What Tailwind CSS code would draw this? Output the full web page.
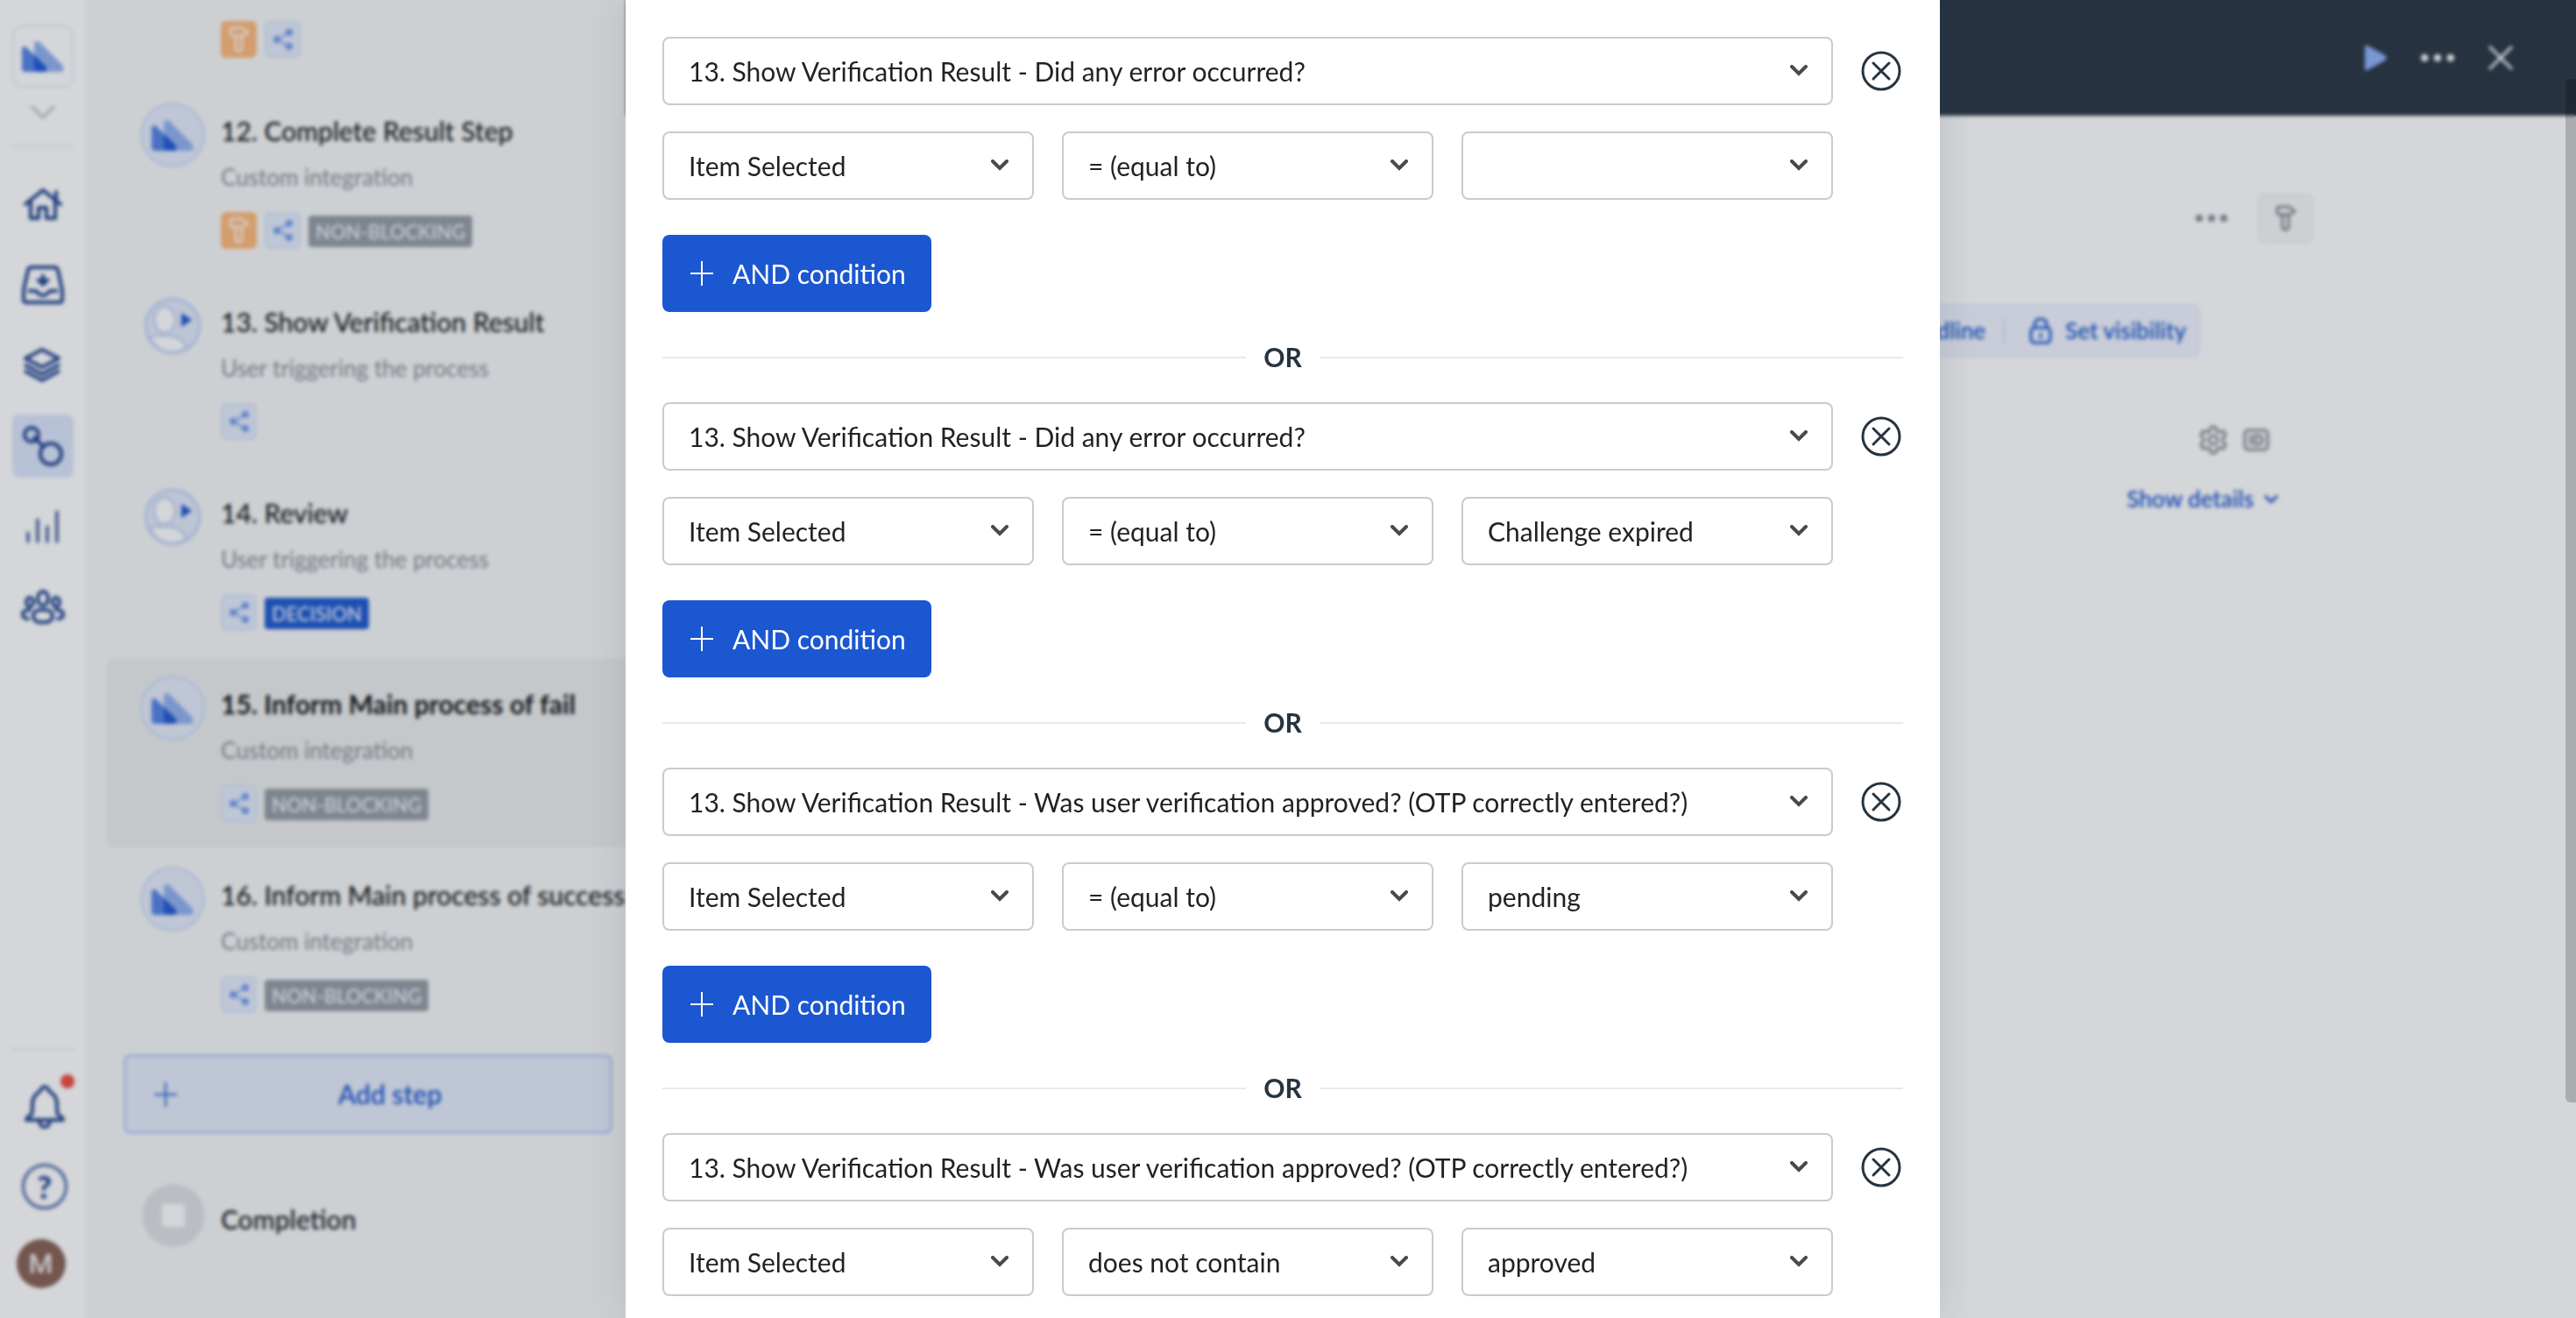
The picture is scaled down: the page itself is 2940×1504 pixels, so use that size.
<!DOCTYPE html>
<html lang="en">
<head>
  <meta charset="UTF-8" />
  <meta name="viewport" content="width=device-width, initial-scale=1.0" />
  <title>Process editor - Step conditions</title>
  <script src="https://cdn.jsdelivr.net/npm/@tailwindcss/browser@4"></script>
</head>
<body class="h-screen overflow-hidden bg-white font-['Lato',sans-serif] text-[30px] text-[#1f2124]">

  <!-- shared icons -->
  <svg class="hidden">
    <symbol id="logo" viewBox="0 0 48 35">
      <path fill="#5382e5" d="M0 10Q0 6 3 6Q5 6 7 9L27 28Q31 35 25 35H4Q0 35 0 31Z" />
      <path fill="#90b0f1" d="M14 4Q14 0 18 0Q20 0 22 3L46 27Q50 35 44 35H18Q14 35 14 31Z" />
      <path fill="#1c57d4" d="M14 16L27 28Q31 35 25 35H18Q14 35 14 31Z" />
    </symbol>
    <symbol id="user" viewBox="0 0 66 66">
      <circle cx="33" cy="33" r="31" fill="#e2eafa" stroke="#c3d3f7" stroke-width="3" />
      <ellipse cx="24" cy="26" rx="12" ry="15" fill="#fff" stroke="#c8d6f5" stroke-width="3" />
      <path d="M7 46Q12 43 26 44Q42 44 49 57Q42 63 33 63Q15 63 7 46Z" fill="#fff" stroke="#c8d6f5" stroke-width="3" />
      <path d="M43 18L55 26L43 34Z" fill="#1b57d0" />
    </symbol>
    <symbol id="share" viewBox="0 0 24 26">
      <path d="M5 13L19 5M5 13L19 21" stroke="currentColor" stroke-width="2" fill="none" />
      <circle cx="5" cy="13" r="4" fill="currentColor" />
      <circle cx="19" cy="5" r="4" fill="currentColor" />
      <circle cx="19" cy="21" r="4" fill="currentColor" />
    </symbol>
    <symbol id="key" viewBox="0 0 24 30">
      <path d="M5 2H14Q17 2 19 5L22 7L19 9Q17 11 14 11H5Q2 11 2 8V5Q2 2 5 2ZM8 11V25Q8 28 11 28Q15 28 15 25V11" fill="none" stroke="currentColor" stroke-width="3" stroke-linejoin="round" />
    </symbol>
    <symbol id="chevron" viewBox="0 0 20 13">
      <path d="M2 2L10 10L18 2" fill="none" stroke="currentColor" stroke-width="4" stroke-linecap="round" stroke-linejoin="miter" />
    </symbol>
    <symbol id="plus" viewBox="0 0 26 28">
      <path d="M13 0V28M0 14H26" fill="none" stroke="currentColor" stroke-width="2" />
    </symbol>
    <symbol id="dots" viewBox="0 0 36 8">
      <circle cx="4" cy="4" r="4" fill="currentColor" />
      <circle cx="18" cy="4" r="4" fill="currentColor" />
      <circle cx="32" cy="4" r="4" fill="currentColor" />
    </symbol>
  </svg>

  <div class="flex h-full overflow-hidden">

    <!-- Sidebar -->
    <nav class="flex w-[97px] shrink-0 flex-col items-center bg-white pt-[29px] pb-[34px] text-[#1c3f8c]">
      <button aria-label="Workspace" class="flex h-[71px] w-[70px] items-center justify-center rounded-xl border-2 border-[#e8ebf3]">
        <svg class="h-[35px] w-12"><use href="#logo" /></svg>
      </button>
      <button aria-label="Switch workspace" class="mt-5 text-[#b9bfc6]">
        <svg class="h-4 w-7" viewBox="0 0 28 16" fill="none" stroke="currentColor" stroke-width="3"><path d="M1 1L14 14L27 1" /></svg>
      </button>
      <hr class="mt-[30px] w-[70px] border-t-2 border-[#eceef0]" />

      <div class="mt-[29px] flex flex-col gap-5">
        <a href="#" aria-label="Home" class="flex h-18 w-[70px] items-center justify-center rounded-lg">
          <svg class="h-10 w-12" viewBox="0 0 48 40" fill="none" stroke="currentColor" stroke-width="4" stroke-linejoin="round" stroke-linecap="round">
            <path d="M4 20L24 4L44 20M39 6V16M10 16V36H19V24H28V36H38V16" />
          </svg>
        </a>
        <a href="#" aria-label="Inbox" class="flex h-18 w-[70px] items-center justify-center rounded-lg">
          <svg class="h-11 w-12" viewBox="0 0 48 44" fill="none" stroke="currentColor" stroke-width="4" stroke-linejoin="round">
            <path d="M11 2H37Q40 2 41 5L46 28V39Q46 42 43 42H5Q2 42 2 39V28L7 5Q8 2 11 2ZM7 29H16Q20 34 24 34Q28 34 32 29H41M24 10V20" />
            <path d="M17 16H31L24 23Z" fill="currentColor" stroke-width="2" />
          </svg>
        </a>
        <a href="#" aria-label="Templates" class="flex h-18 w-[70px] items-center justify-center rounded-lg">
          <svg class="h-10 w-11" viewBox="0 0 44 40" fill="none" stroke="currentColor" stroke-width="4" stroke-linejoin="round">
            <path d="M21 2L40 12L21 22L2 12ZM1 19L21 30L41 19M1 26L21 37L41 26" />
          </svg>
        </a>
        <a href="#" aria-label="Processes" aria-current="page" class="flex h-18 w-[70px] items-center justify-center rounded-lg bg-[#dce6fc]">
          <svg class="h-[46px] w-[46px]" viewBox="0 0 46 46" fill="none" stroke="currentColor" stroke-width="4">
            <circle cx="10" cy="10" r="8" /><circle cx="32" cy="32" r="12" /><path d="M12 12L24 24" />
          </svg>
        </a>
        <a href="#" aria-label="Reports" class="flex h-18 w-[70px] items-center justify-center rounded-lg">
          <svg class="h-10 w-10" viewBox="0 0 40 40" fill="none" stroke="currentColor" stroke-width="3" stroke-linecap="round">
            <path d="M3 27V37M14 12V37M25 20V37M36 3V37" />
          </svg>
        </a>
        <a href="#" aria-label="People" class="flex h-18 w-[70px] items-center justify-center rounded-lg">
          <svg class="h-10 w-[50px]" viewBox="0 0 50 40" fill="none" stroke="currentColor" stroke-width="4" stroke-linecap="round">
            <ellipse cx="25" cy="10" rx="6" ry="8" /><ellipse cx="10" cy="14" rx="4" ry="5" /><ellipse cx="40" cy="14" rx="4" ry="5" />
            <rect x="14" y="23" width="22" height="14" rx="7" />
            <path d="M10 23Q2 23 2 28Q2 33 8 33M40 23Q48 23 48 28Q48 33 42 33" />
          </svg>
        </a>
      </div>

      <hr class="mt-auto w-[72px] border-t-2 border-[#eceef0]" />
      <button aria-label="Notifications" class="relative mt-10 ml-1">
        <svg class="h-[50px] w-[46px]" viewBox="0 0 46 50" fill="none" stroke="currentColor" stroke-width="4" stroke-linejoin="round">
          <path d="M23 2Q20 2 18 7Q9 12 9 22Q9 31 8 34Q2 37 2 40H44Q44 37 38 34Q37 31 37 22Q37 12 28 7Q26 2 23 2ZM17 41Q18 48 23 48Q28 48 29 41" />
        </svg>
        <span class="absolute -top-3 -right-[11px] h-4 w-4 rounded-full bg-[#f04a3c]"></span>
      </button>
      <button aria-label="Help" class="mt-10 ml-1 flex h-[52px] w-[52px] items-center justify-center rounded-full border-3 border-[#3b5da3] text-[36px] leading-none font-black">?</button>
      <button aria-label="Account" class="mt-[34px] mr-1 flex h-[56px] w-[56px] shrink-0 items-center justify-center rounded-full bg-[#865f54] font-['Roboto',sans-serif] text-[32px] leading-none font-medium text-[#efe9e7]">M</button>
    </nav>

    <!-- Steps -->
    <section class="w-[618px] shrink-0 overflow-hidden bg-[#f7f8f8] pl-6">
      <ol id="steps" class="-mt-[121px] flex flex-col gap-0.5"></ol>
      <button class="mt-[18px] ml-5 flex h-[91px] w-[558px] items-center rounded-lg border-3 border-[#b9cdf8] bg-[#e5ecfb] pr-5 pl-8 font-semibold text-[#1b57d0]">
        <svg class="h-7 w-[26px]"><use href="#plus" /></svg>
        <span class="flex-1 pl-3 text-center">Add step</span>
      </button>
      <div class="mt-[57px] flex items-center gap-[18px] pl-[41px]">
        <span class="flex h-18 w-18 items-center justify-center rounded-full bg-[#dfe2e5]"><span class="h-[26px] w-[26px] rounded-sm bg-white"></span></span>
        <span class="pt-2 font-semibold">Completion</span>
      </div>
    </section>

    <!-- Step detail -->
    <main class="min-w-0 flex-1 bg-white">
      <header class="flex h-[132px] items-center justify-end gap-[39px] bg-[#263340] pr-[72px] text-white">
        <button aria-label="Run" class="text-[#8eb0fb]">
          <svg class="h-[30px] w-[25px]" viewBox="0 0 25 30"><path d="M0 3Q0 0 3 1L23 12Q26 15 23 18L3 29Q0 30 0 27Z" fill="currentColor" /></svg>
        </button>
        <button aria-label="More"><svg class="h-2.5 w-[38px]"><use href="#dots" /></svg></button>
        <button aria-label="Close"><svg class="h-[30px] w-[28px]" viewBox="0 0 28 30" fill="none" stroke="currentColor" stroke-width="3"><path d="M1 2L27 28M27 2L1 28" /></svg></button>
      </header>

      <div class="flex items-center justify-end gap-[35px] pt-[89px] pr-[300px] text-[#7f868e]">
        <button aria-label="Step options"><svg class="h-2 w-[36px]"><use href="#dots" /></svg></button>
        <button aria-label="Key" class="flex h-[56px] w-[63px] items-center justify-center rounded-md border-2 border-[#eff0f1] bg-[#f7f8f8]"><svg class="h-[30px] w-6"><use href="#key" /></svg></button>
      </div>

      <div class="mt-[70px] flex justify-end pr-[429px] text-[26px] font-semibold text-[#1b57d0]">
        <div class="flex h-[61px] items-center rounded-lg border-2 border-[#e9eefd] bg-[#f0f4ff] px-3.5 whitespace-nowrap">
          <button>Set deadline</button>
          <span class="mx-[20px] h-[30px] w-0.5 bg-[#d5dbe8]"></span>
          <button class="flex items-center gap-[15px] pl-2">
            <svg class="h-[31px] w-[26px]" viewBox="0 0 26 31" fill="none" stroke="currentColor" stroke-width="3"><rect x="2" y="12" width="22" height="17" rx="4" /><path d="M6 12V9Q6 2 13 2Q20 2 20 9V12M13 18V24" /></svg>
            Set visibility
          </button>
        </div>
      </div>

      <div class="mt-[77px] flex items-center justify-end gap-[18px] pr-[350px] text-[#7f868e]">
        <button aria-label="Settings"><svg class="h-[34px] w-8" viewBox="0 0 32 34" fill="none" stroke="currentColor" stroke-width="3" stroke-linejoin="round"><path d="M13 3Q16 1 19 3L20 7L23 8L27 7Q30 9 30 12L27 15V19L30 22Q30 25 27 27L23 26L20 27L19 31Q16 33 13 31L12 27L9 26L5 27Q2 25 2 22L5 19V15L2 12Q2 9 5 7L9 8L12 7Z" /><circle cx="16" cy="17" r="5" /></svg></button>
        <button aria-label="Show ID"><svg class="h-[26px] w-[30px]" viewBox="0 0 30 26" fill="none" stroke="currentColor" stroke-width="3"><rect x="2" y="2" width="26" height="22" rx="4" /><path d="M9 7V19M14 8H17Q22 8 22 13Q22 18 17 18H14Z" /></svg></button>
      </div>
      <div class="mt-[31px] flex justify-end pr-[340px]">
        <button class="flex items-center gap-3 text-[26px] font-semibold text-[#1b57d0]">Show details <svg class="h-2.5 w-4"><use href="#chevron" /></svg></button>
      </div>
    </main>
  </div>

  <!-- Modal -->
  <div class="fixed inset-0 flex justify-center overflow-hidden bg-[#263340]/20 pr-3 backdrop-blur-[2px]">
    <div role="dialog" aria-label="Step conditions" class="h-full w-[1500px] overflow-hidden bg-white px-[42px] pt-[42px] shadow-[0_0_40px_rgba(38,51,64,0.15)]">
      <form id="conditions"></form>
    </div>
    <div class="absolute top-[90px] right-0 h-[1168px] w-3 rounded-l-md bg-black/20"></div>
  </div>

  <script>
    const steps = [
      { title: "", sub: "", icon: "logo", key: true },
      { title: "12. Complete Result Step", sub: "Custom integration", icon: "logo", key: true, badge: "NON-BLOCKING" },
      { title: "13. Show Verification Result", sub: "User triggering the process", icon: "user" },
      { title: "14. Review", sub: "User triggering the process", icon: "user", badge: "DECISION" },
      { title: "15. Inform Main process of fail", sub: "Custom integration", icon: "logo", badge: "NON-BLOCKING", selected: true },
      { title: "16. Inform Main process of success", sub: "Custom integration", icon: "logo", badge: "NON-BLOCKING" }
    ];

    const anyError = "13. Show Verification Result - Did any error occurred?";
    const approved = "13. Show Verification Result - Was user verification approved? (OTP correctly entered?)";
    const conditions = [
      { field: anyError, operator: "= (equal to)", value: "" },
      { field: anyError, operator: "= (equal to)", value: "Challenge expired" },
      { field: approved, operator: "= (equal to)", value: "pending" },
      { field: approved, operator: "does not contain", value: "approved" }
    ];

    function stepIcon(icon) {
      if (icon === "user") {
        return `<svg class="mx-1 mt-1 h-[66px] w-[66px]"><use href="#user" /></svg>`;
      }
      return `<span class="flex h-[74px] w-[74px] items-center justify-center rounded-full border-2 border-[#c8d8fa] bg-[#e5ecfa]"><svg class="h-[35px] w-12"><use href="#logo" /></svg></span>`;
    }

    function badge(text) {
      if (!text) return "";
      const color = text === "DECISION" ? "bg-[#1b57d0] text-[#dfe8fb]" : "bg-[#939ba3] text-[#eceef0]";
      return `<span class="mt-0.5 flex h-9 items-center rounded-sm px-2 text-[22px] font-semibold ${color}">${text}</span>`;
    }

    document.getElementById("steps").innerHTML = steps.map(step => `
      <li class="flex h-[216px] gap-[18px] rounded-lg pt-5 pl-[39px] ${step.selected ? "bg-[#edeeee]" : ""}">
        <div class="shrink-0">${stepIcon(step.icon)}</div>
        <div class="pt-3 whitespace-nowrap">
          <h3 class="h-[40px] leading-[40px] ${step.selected ? "font-bold text-[#0d0e10]" : "font-medium text-[#0d0e10]"}">${step.title}</h3>
          <p class="mt-[15px] h-9 text-[26px] leading-9 text-[#858b94]">${step.sub}</p>
          <div class="mt-[22px] flex items-center gap-[9px]">
            ${step.key ? `<span class="flex h-[42px] w-[41px] items-center justify-center rounded-md bg-[#ffb878] text-[#fff0e2]"><svg class="h-[30px] w-6"><use href="#key" /></svg></span>` : ""}
            <span class="flex h-[42px] w-[41px] items-center justify-center rounded-md border-2 border-[#d3e0fb] bg-[#e5ecfa] text-[#6f97ee]"><svg class="h-[26px] w-6"><use href="#share" /></svg></span>
            ${badge(step.badge)}
          </div>
        </div>
      </li>`).join("");

    function select(label, value) {
      return `
        <div class="relative">
          <select aria-label="${label}" class="h-[78px] w-full appearance-none rounded-lg border-2 border-[#c8cbcf] bg-white pr-16 pl-7 text-[#1f2124]">
            <option>${value}</option>
          </select>
          <svg class="pointer-events-none absolute top-8 right-[29px] h-[13px] w-5 text-[#4a4a4a]"><use href="#chevron" /></svg>
        </div>`;
    }

    document.getElementById("conditions").innerHTML = conditions.map((c, i) => `
      ${i > 0 ? `
      <div class="flex h-[103px] items-center gap-5 font-bold text-[#263340]">
        <span class="h-0.5 flex-1 bg-[#e9e9ea]"></span>OR<span class="h-0.5 flex-1 bg-[#e9e9ea]"></span>
      </div>` : ""}
      <fieldset>
        <div class="flex items-center gap-8 pr-0.5">
          <div class="flex-1">${select("Form field", c.field)}</div>
          <button type="button" aria-label="Remove condition" class="text-[#263340]">
            <svg class="h-[46px] w-[46px]" viewBox="0 0 46 46" fill="none" stroke="currentColor" stroke-width="3"><circle cx="23" cy="23" r="21" /><path d="M14 14L32 32M32 14L14 32" stroke-linecap="round" /></svg>
          </button>
        </div>
        <div class="mt-[30px] grid grid-cols-3 gap-8 pr-20">
          ${select("Item", "Item Selected")}
          ${select("Operator", c.operator)}
          ${select("Value", c.value)}
        </div>
        <button type="button" class="mt-10 flex h-[88px] items-center gap-[22px] rounded-lg bg-[#1b57d0] pr-[29px] pl-8 text-white">
          <svg class="h-7 w-[26px]"><use href="#plus" /></svg>AND condition
        </button>
      </fieldset>`).join("");
  </script>
</body>
</html>
